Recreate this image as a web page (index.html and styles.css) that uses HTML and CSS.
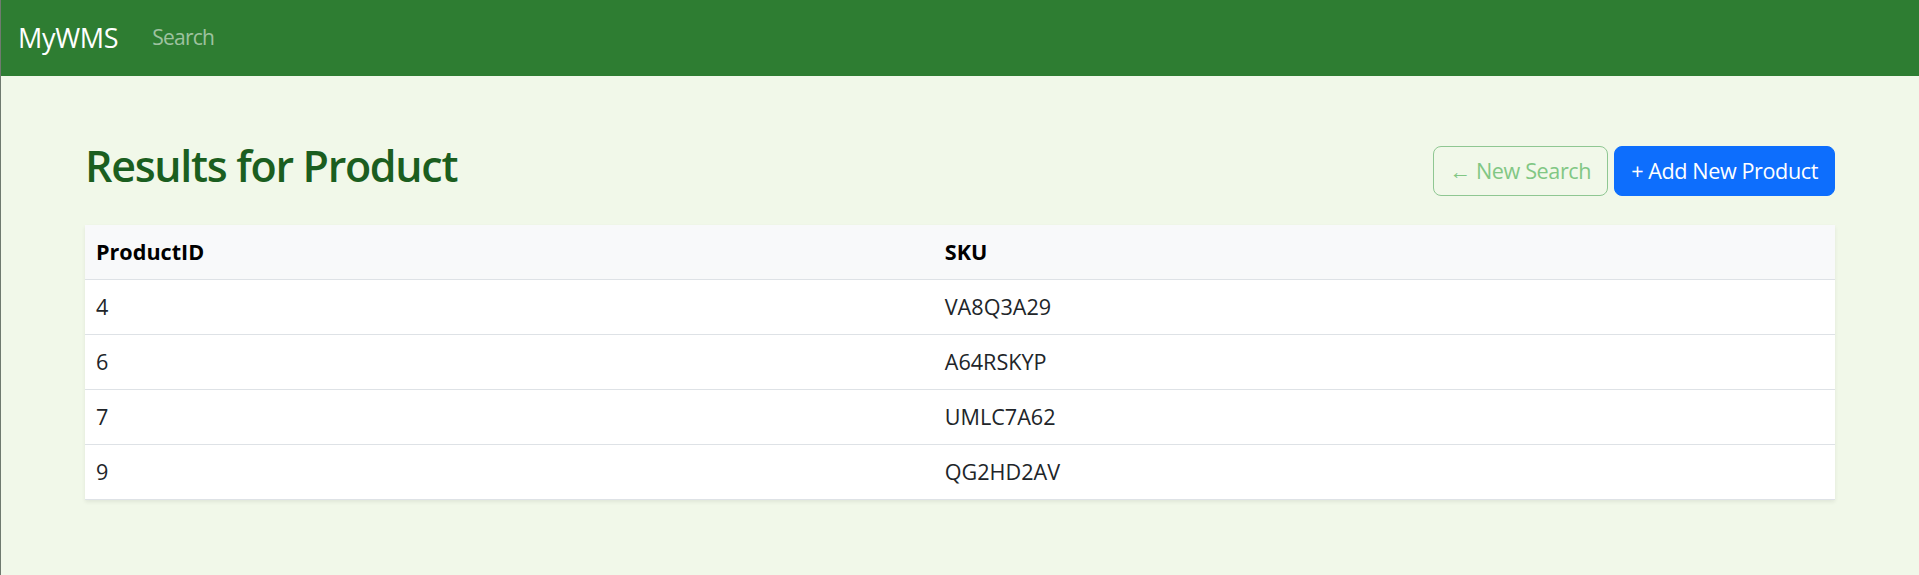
FILE: index.html
```html
<!DOCTYPE html>
<html lang="en">
<head>
<meta charset="utf-8">
<title>MyWMS - Results for Product</title>
<link rel="stylesheet" href="styles.css">
</head>
<body>
<nav class="navbar">
  <a class="brand" href="#">MyWMS</a>
  <a class="nav-link" href="#">Search</a>
</nav>
<main class="container">
  <div class="page-head">
    <h2 class="title">Results for Product</h2>
    <div class="actions">
      <a class="btn btn-outline" href="#">&larr; New Search</a>
      <a class="btn btn-primary" href="#">+ Add New Product</a>
    </div>
  </div>
  <table class="table">
    <colgroup><col class="col-id"><col></colgroup>
    <thead>
      <tr><th>ProductID</th><th>SKU</th></tr>
    </thead>
    <tbody>
      <tr><td>4</td><td>VA8Q3A29</td></tr>
      <tr><td>6</td><td>A64RSKYP</td></tr>
      <tr><td>7</td><td>UMLC7A62</td></tr>
      <tr><td>9</td><td>QG2HD2AV</td></tr>
    </tbody>
  </table>
</main>
</body>
</html>
```
FILE: styles.css
```css
* { box-sizing: border-box; }
html, body { height: 100%; }
body {
  margin: 0;
  background: #f1f8e9;
  font-family: "Open Sans", "Noto Sans", sans-serif;
  font-size: 21.6px;
  line-height: 1.5;
  color: #212529;
  border-left: 1px solid #6f7a6f;
}
a { text-decoration: none; }
.navbar {
  height: 76px;
  background: #2e7d32;
  display: flex;
  align-items: center;
  padding: 0 17px;
}
.brand {
  color: #fff;
  font-size: 27px;
  letter-spacing: -0.3px;
  margin-right: 23px;
}
.nav-link {
  color: rgba(255,255,255,0.55);
  font-size: 21px;
  letter-spacing: -0.8px;
  padding: 0 11px;
}
.container {
  width: 1750px;
  margin: 0 auto;
  padding-top: 64px;
}
.page-head {
  display: flex;
  justify-content: space-between;
  align-items: center;
  margin-bottom: 22px;
}
.title {
  margin: 0 0 11px;
  font-size: 43px;
  font-weight: 600;
  letter-spacing: -1.3px;
  line-height: 1.2;
  color: #1b5e20;
}
.actions { display: flex; gap: 6px; }
.btn {
  display: inline-block;
  font-size: 21.6px;
  letter-spacing: -0.4px;
  line-height: 1.5;
  padding: 8px 16px;
  border: 1px solid transparent;
  border-radius: 8px;
}
.btn-outline {
  color: #81c784;
  border-color: #8fc792;
}
.btn-primary {
  color: #fff;
  background: #0d6efd;
  border-color: #0d6efd;
}
.table {
  width: 100%;
  border-collapse: collapse;
  background: #fff;
  box-shadow: 0 2px 4px rgba(0,0,0,0.075);
}
.col-id { width: 48.5%; }
.table th, .table td {
  text-align: left;
  padding: 11px 11px;
  border-bottom: 1px solid #dee2e6;
  font-size: 21.6px;
  line-height: 32px;
}
.table th {
  background: #f8f9fa;
  color: #000;
  font-weight: 700;
}
```
